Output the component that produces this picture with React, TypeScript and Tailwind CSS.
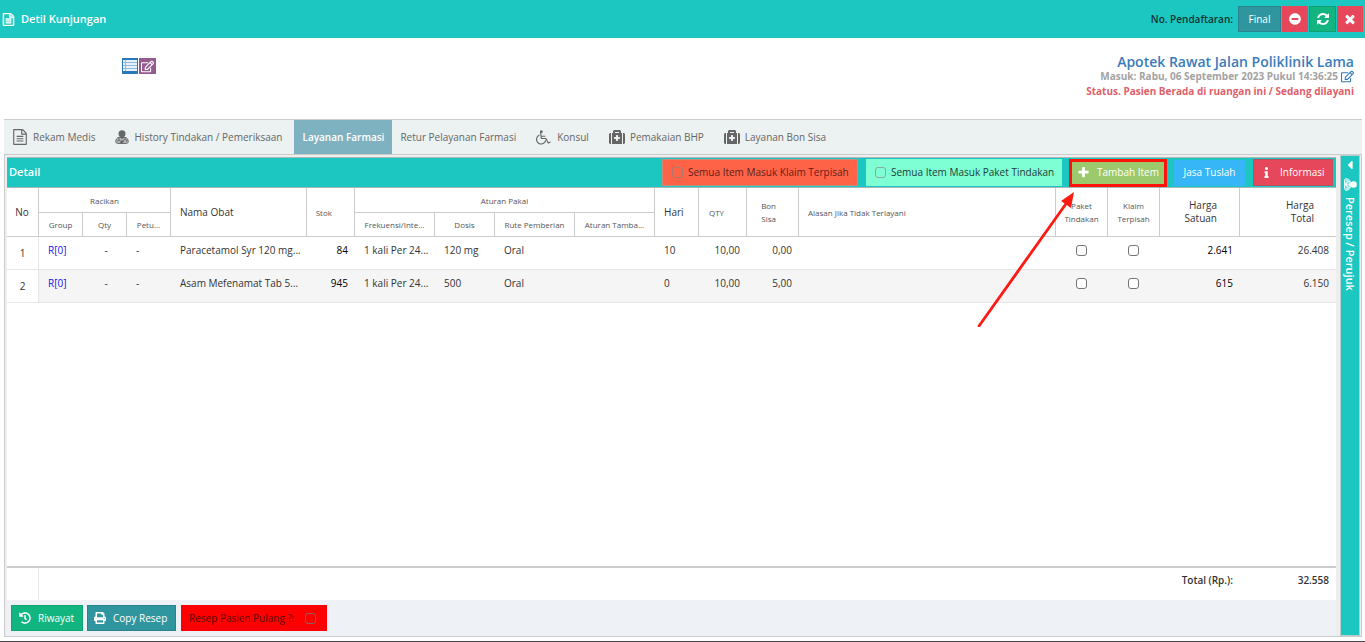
import { ReactNode } from 'react'
import {
  FaCaretLeft,
  FaHistory,
  FaInfo,
  FaMedkit,
  FaMinusCircle,
  FaPrint,
  FaRegEdit,
} from 'react-icons/fa'

type IconProps = { className?: string }

const iconPaths = {
  file: 'M1596 380q28 28 48 76t20 88v1152q0 40-28 68t-68 28h-1344q-40 0-68-28t-28-68v-1600q0-40 28-68t68-28h896q40 0 88 20t76 48zm-444-244v376h376q-10-29-22-41l-313-313q-12-12-41-22zm384 1528v-1024h-416q-40 0-68-28t-28-68v-416h-768v1536h1280zm-1024-864q0-14 9-23t23-9h704q14 0 23 9t9 23v64q0 14-9 23t-23 9h-704q-14 0-23-9t-9-23v-64zm736 224q14 0 23 9t9 23v64q0 14-9 23t-23 9h-704q-14 0-23-9t-9-23v-64q0-14 9-23t23-9h704zm0 256q14 0 23 9t9 23v64q0 14-9 23t-23 9h-704q-14 0-23-9t-9-23v-64q0-14 9-23t23-9h704z',
  refresh:
    'M1639 1056q0 5-1 7-64 268-268 434.5t-478 166.5q-146 0-282.5-55t-243.5-157l-129 129q-19 19-45 19t-45-19-19-45v-448q0-26 19-45t45-19h448q26 0 45 19t19 45-19 45l-137 137q71 66 161 102t187 36q134 0 250-65t186-179q11-17 53-117 8-23 30-23h192q13 0 22.5 9.5t9.5 22.5zm25-800v448q0 26-19 45t-45 19h-448q-26 0-45-19t-19-45 19-45l138-138q-148-137-349-137-134 0-250 65t-186 179q-11 17-53 117-8 23-30 23h-199q-13 0-22.5-9.5t-9.5-22.5v-7q65-268 270-434.5t480-166.5q146 0 284 55.5t245 156.5l130-129q19-19 45-19t45 19 19 45z',
  times:
    'M1490 1322q0 40-28 68l-136 136q-28 28-68 28t-68-28l-294-294-294 294q-28 28-68 28t-68-28l-136-136q-28-28-28-68t28-68l294-294-294-294q-28-28-28-68t28-68l136-136q28-28 68-28t68 28l294 294 294-294q28-28 68-28t68 28l136 136q28 28 28 68t-28 68l-294 294 294 294q28 28 28 68z',
  plus: 'M1600 736v192q0 40-28 68t-68 28h-416v416q0 40-28 68t-68 28h-192q-40 0-68-28t-28-68v-416h-416q-40 0-68-28t-28-68v-192q0-40 28-68t68-28h416v-416q0-40 28-68t68-28h192q40 0 68 28t28 68v416h416q40 0 68 28t28 68z',
  wheelchair:
    'M1023 1139l102 204q-58 179-210 290t-339 111q-156 0-288.5-77.5t-210-210-77.5-288.5q0-181 104.5-330t274.5-211l17 131q-122 54-195 165.5t-73 244.5q0 185 131.5 316.5t316.5 131.5q126 0 232.5-65t165-175.5 49.5-236.5zm571 251l58 114-256 128q-13 7-29 7-40 0-57-35l-239-477h-471q-24 0-42.5-16.5t-21.5-40.5l-96-779q-2-16 6-42 14-51 57-82.5t97-31.5q66 0 113 47t47 113q0 69-52 117.5t-120 41.5l37 289h423v128h-407l16 128h455q40 0 57 35l228 455z',
}

function Icon({ name, className }: IconProps & { name: keyof typeof iconPaths }) {
  return (
    <svg viewBox="0 0 1792 1792" fill="currentColor" className={className} aria-hidden="true">
      <path d={iconPaths[name]} />
    </svg>
  )
}

function DoctorIcon({ className }: IconProps) {
  return (
    <svg viewBox="0 0 14 14" className={className} aria-hidden="true">
      <circle cx="7" cy="3.7" r="3.5" fill="currentColor" />
      <path
        d="M4 7.4C1.8 7.8.8 9.4.8 11.6c0 1.2.7 1.8 1.8 1.8h8.8c1.1 0 1.8-.6 1.8-1.8 0-2.2-1-3.8-3.2-4.2z"
        fill="currentColor"
        fillOpacity=".4"
        stroke="currentColor"
        strokeWidth="1"
      />
      <path
        d="M4 7.4v3M10 7.2v2M5.5 12.8v-1.2a1.5 1.5 0 0 0-3 0M8.5 11.8V11a1.6 1.6 0 0 1 3.2 0v.8"
        fill="none"
        stroke="currentColor"
        strokeWidth=".9"
      />
      <path d="M6 13.4v-3h2v3zM5.2 7h3.6L7 9.6z" fill="currentColor" />
    </svg>
  )
}

function ListIcon({ className }: IconProps) {
  return (
    <svg viewBox="0 0 16 16" className={className} aria-hidden="true">
      <path fill="#e8f1f8" d="M1 2h14v11H1z" />
      <path fill="#2a78b8" fillOpacity=".45" d="M1 4h14v1H1zM1 7h14v1H1zM1 10h14v1H1zM3 2h1v11H3z" />
    </svg>
  )
}

function Checkbox({ id, label, tone }: { id?: string; label?: string; tone?: string }) {
  return (
    <input
      type="checkbox"
      id={id}
      aria-label={label}
      className={`block size-[11px] appearance-none rounded-[3px] border ${tone ?? 'border-[#767676] bg-white'}`}
    />
  )
}

type Tab = { label: string; icon?: ReactNode; active?: boolean }

const tabs: Tab[] = [
  { label: 'Rekam Medis', icon: <Icon name="file" className="size-4" /> },
  { label: 'History Tindakan / Pemeriksaan', icon: <DoctorIcon className="size-[14px]" /> },
  { label: 'Layanan Farmasi', active: true },
  { label: 'Retur Pelayanan Farmasi' },
  { label: 'Konsul', icon: <Icon name="wheelchair" className="size-4" /> },
  { label: 'Pemakaian BHP', icon: <FaMedkit className="size-4" /> },
  { label: 'Layanan Bon Sisa', icon: <FaMedkit className="size-4" /> },
]

const items = [
  {
    no: 1,
    nama: 'Paracetamol Syr 120 mg...',
    stok: '84',
    dosis: '120 mg',
    hari: '10',
    qty: '10,00',
    sisa: '0,00',
    satuan: '2.641',
    total: '26.408',
  },
  {
    no: 2,
    nama: 'Asam Mefenamat Tab 5...',
    stok: '945',
    dosis: '500',
    hari: '0',
    qty: '10,00',
    sisa: '5,00',
    satuan: '615',
    total: '6.150',
  },
]

function TopBar() {
  return (
    <header className="flex h-[38px] items-center justify-between bg-[#1cc7c1] px-[2px] text-white">
      <h1 className="flex items-center gap-1.5 text-[11px] font-semibold">
        <Icon name="file" className="size-[13px] stroke-white stroke-[70]" />
        Detil Kunjungan
      </h1>
      <div className="flex items-center gap-px">
        <span className="mr-1 text-[10px] font-semibold text-[#0f3436]">No. Pendaftaran:</span>
        <button className="h-[26px] w-[43px] border border-[#2a838c] bg-[#2f96a0] text-[10px] font-medium">
          Final
        </button>
        <button aria-label="Batal" className="flex h-[26px] w-[26px] items-center justify-center bg-[#e7475a]">
          <FaMinusCircle className="size-3" />
        </button>
        <button
          aria-label="Muat ulang"
          className="flex h-[26px] w-[27px] items-center justify-center border border-[#0f9f70] bg-[#12b57f]"
        >
          <Icon name="refresh" className="size-[14px]" />
        </button>
        <button aria-label="Tutup" className="flex h-[26px] w-[26px] items-center justify-center bg-[#e7475a]">
          <Icon name="times" className="size-[14px]" />
        </button>
      </div>
    </header>
  )
}

function VisitInfo() {
  return (
    <section className="flex h-[81px] justify-between pl-[122px] pr-[11px] pt-4">
      <div className="flex gap-px pt-1">
        <button aria-label="Daftar" className="flex size-4 items-center justify-center bg-[#2a78b8]">
          <ListIcon className="size-4" />
        </button>
        <button aria-label="Ubah" className="flex h-4 w-[17px] items-center justify-center bg-[#945b8f] text-white">
          <FaRegEdit className="size-[13px]" />
        </button>
      </div>
      <div className="text-right text-[10px] leading-[15px]">
        <h2 className="text-[14px] font-semibold text-[#3a7bba]">Apotek Rawat Jalan Poliklinik Lama</h2>
        <p className="flex items-center justify-end gap-[3px] font-bold text-[#a3a3a3]">
          Masuk: Rabu, 06 September 2023 Pukul 14:36:25
          <a href="#ubah" aria-label="Ubah tanggal masuk" className="text-[#337ab7]">
            <FaRegEdit className="size-[13px]" />
          </a>
        </p>
        <p className="font-bold text-[#e0606a]">Status. Pasien Berada di ruangan ini / Sedang dilayani</p>
      </div>
    </section>
  )
}

function Toolbar() {
  return (
    <div className="flex h-[31px] items-center border-y border-[#a9b8b8] bg-[#1cc7c1] pl-[2px] pr-[3px] text-[10px]">
      <h3 className="mr-auto text-[11px] font-semibold text-white">Detail</h3>
      <div className="flex items-center gap-2">
        <label
          htmlFor="klaim"
          className="flex h-[27px] w-[196px] items-center gap-[5px] border border-[#c98c7c] bg-[#ff6347] pl-[9px] font-medium text-[#5e1f18]"
        >
          <Checkbox id="klaim" tone="border-[#a67a6c]" />
          Semua Item Masuk Klaim Terpisah
        </label>
        <label
          htmlFor="paket"
          className="flex h-[27px] w-[196px] items-center gap-[5px] bg-[#7fffd4] pl-[9px] font-medium text-[#1d3d35]"
        >
          <Checkbox id="paket" tone="border-[#8aa89d]" />
          Semua Item Masuk Paket Tindakan
        </label>
        <div className="relative -mx-px">
          <button className="flex h-7 w-[98px] items-center gap-[7px] border-[3px] border-[#fb1409] bg-[#9cc96b] pl-[5px] font-medium text-white">
            <Icon name="plus" className="size-[13px]" />
            Tambah Item
          </button>
          {/* pointer towards the add button */}
          <svg
            viewBox="0 0 100 140"
            className="pointer-events-none absolute right-[92px] top-full z-10 h-[140px] w-[100px]"
            aria-hidden="true"
          >
            <path d="M4 139 93 14" stroke="#fb1a14" strokeWidth="2.8" strokeLinecap="round" />
            <path d="M99 5 96 21 86 14z" fill="#fb1a14" />
          </svg>
        </div>
        <button className="h-[26px] w-[71px] bg-[#36b6f6] font-medium text-white">Jasa Tuslah</button>
        <button className="flex h-[27px] w-[80px] items-center gap-2 border border-[#b9505e] bg-[#e7475a] pl-[7px] font-medium text-white">
          <FaInfo className="size-[11px]" />
          Informasi
        </button>
      </div>
    </div>
  )
}

const th = 'border-b border-r border-[#ccc] px-2 font-normal'
const thSmall = `${th} text-[8px] text-[#555]`
const thLeft = 'pl-[9px] text-left'
const thRight = 'pr-[22px] text-right'

function ItemTable() {
  return (
    <table className="w-full table-fixed border-separate border-spacing-0 bg-white text-[10px] leading-[13px] text-[#333]">
      <colgroup>
        <col className="w-8" />
        <col className="w-11" />
        <col className="w-11" />
        <col className="w-11" />
        <col className="w-[136px]" />
        <col className="w-12" />
        <col className="w-20" />
        <col className="w-[60px]" />
        <col className="w-20" />
        <col className="w-20" />
        <col className="w-11" />
        <col className="w-12" />
        <col className="w-[52px]" />
        <col />
        <col className="w-[52px]" />
        <col className="w-[52px]" />
        <col className="w-20" />
        <col className="w-24" />
      </colgroup>
      <thead>
        <tr className="h-[25px]">
          <th rowSpan={2} className={`${th} pr-[9px]`}>No</th>
          <th colSpan={3} className={thSmall}>Racikan</th>
          <th rowSpan={2} className={`${th} ${thLeft}`}>Nama Obat</th>
          <th rowSpan={2} className={`${thSmall} ${thRight}`}>Stok</th>
          <th colSpan={4} className={thSmall}>Aturan Pakai</th>
          <th rowSpan={2} className={`${th} ${thLeft}`}>Hari</th>
          <th rowSpan={2} className={`${thSmall} ${thRight}`}>QTY</th>
          <th rowSpan={2} className={`${thSmall} ${thRight}`}>Bon<br />Sisa</th>
          <th rowSpan={2} className={`${thSmall} ${thLeft}`}>Alasan Jika Tidak Terlayani</th>
          <th rowSpan={2} className={thSmall}>Paket<br />Tindakan</th>
          <th rowSpan={2} className={thSmall}>Klaim<br />Terpisah</th>
          <th rowSpan={2} className={`${th} ${thRight}`}>Harga<br />Satuan</th>
          <th rowSpan={2} className={`border-b border-[#ccc] font-normal ${thRight}`}>Harga<br />Total</th>
        </tr>
        <tr className="h-6 whitespace-nowrap">
          <th className={thSmall}>Group</th>
          <th className={thSmall}>Qty</th>
          <th className={thSmall}>Petu...</th>
          <th className={thSmall}>Frekuensi/Inte...</th>
          <th className={thSmall}>Dosis</th>
          <th className={thSmall}>Rute Pemberian</th>
          <th className={thSmall}>Aturan Tamba...</th>
        </tr>
      </thead>
      <tbody>
        {items.map((item) => (
          <tr
            key={item.no}
            className="h-[33px] whitespace-nowrap even:bg-[#f5f5f5] [&>td]:border-b [&>td]:border-[#e6e6e6] [&>td]:px-[7px] [&>td:not(:first-child)]:pb-1.5 [&>td:not(:first-child)]:pl-[9px]"
          >
            <td className="border-r bg-white pt-px text-center">{item.no}</td>
            <td>
              <a href="#resep" className="text-[#1a12e8]">R[0]</a>
            </td>
            <td className="text-center">-</td>
            <td>-</td>
            <td>{item.nama}</td>
            <td className="text-right text-black">{item.stok}</td>
            <td>1 kali Per 24...</td>
            <td>{item.dosis}</td>
            <td>Oral</td>
            <td></td>
            <td>{item.hari}</td>
            <td className="text-right">{item.qty}</td>
            <td className="text-right">{item.sisa}</td>
            <td></td>
            <td>
              <div className="flex justify-center pr-1">
                <Checkbox label={`Paket tindakan ${item.no}`} />
              </div>
            </td>
            <td>
              <div className="flex justify-center pr-1">
                <Checkbox label={`Klaim terpisah ${item.no}`} />
              </div>
            </td>
            <td className="text-right text-black">{item.satuan}</td>
            <td className="text-right">{item.total}</td>
          </tr>
        ))}
      </tbody>
    </table>
  )
}

function BottomActions() {
  return (
    <div className="flex h-9 items-center gap-1 bg-[#eef2f7] px-1 text-[10px] font-medium text-white">
      <button className="flex h-[26px] w-[72px] items-center gap-[7px] border border-[#0fa573] bg-[#12b57f] pl-[7px]">
        <FaHistory className="size-3" />
        Riwayat
      </button>
      <button className="flex h-[26px] w-[89px] items-center gap-[7px] border border-[#2a838c] bg-[#2f96a0] pl-[6px]">
        <FaPrint className="size-3" />
        Copy Resep
      </button>
      <label
        htmlFor="pulang"
        className="ml-px flex h-[26px] w-[146px] items-center justify-between bg-[#fe0000] pl-2 pr-[11px] text-[#5c0a0a]"
      >
        Resep Pasien Pulang ?:
        <Checkbox id="pulang" tone="border-[#8c6060]" />
      </label>
    </div>
  )
}

function SidePanel() {
  return (
    <aside className="mr-px w-5 shrink-0 border border-[#b5cfce] bg-[#1cc7c1]">
      <button className="flex w-full flex-col items-center gap-1.5 pt-0.5 text-white">
        <FaCaretLeft className="size-[14px]" />
        <DoctorIcon className="size-[13px] rotate-90" />
        <span className="text-[11px] font-semibold leading-4 [writing-mode:vertical-rl]">Peresep / Perujuk</span>
      </button>
    </aside>
  )
}

function App() {
  return (
    <div className="flex min-h-screen flex-col border-b border-[#444] bg-white font-['Open_Sans','Noto_Sans',sans-serif]">
      <TopBar />
      <VisitInfo />
      <main className="mb-1 ml-1 mr-[3px] flex flex-1 flex-col">
        <nav className="flex h-[35px] border-t border-[#ccc] bg-[#ecf1f1] text-[10px] font-medium text-[#666]">
          {tabs.map((tab) => (
            <a
              key={tab.label}
              href="#tab"
              className={
                tab.active
                  ? 'flex items-center bg-[#7fb2c1] px-2 font-semibold text-white'
                  : 'flex items-center gap-[5px] pl-2 pr-3'
              }
            >
              {tab.icon}
              {tab.label}
            </a>
          ))}
        </nav>
        <div className="flex flex-1 border border-[#ccc] bg-[#eee]">
          <div className="ml-0.5 mr-1 mt-0.5 flex min-w-0 flex-1 flex-col bg-white">
            <Toolbar />
            <ItemTable />
            <div className="flex-1" />
            <div className="flex h-[34px] border-t-2 border-[#ccc] text-[10px] font-semibold text-[#333]">
              <div className="w-8 border-r border-[#e6e6e6]" />
              <div className="flex flex-1 justify-end pr-[7px] pt-[5px]">
                <span>Total (Rp.):</span>
                <span className="w-24 text-right">32.558</span>
              </div>
            </div>
            <BottomActions />
          </div>
          <SidePanel />
        </div>
      </main>
    </div>
  )
}

export default App
